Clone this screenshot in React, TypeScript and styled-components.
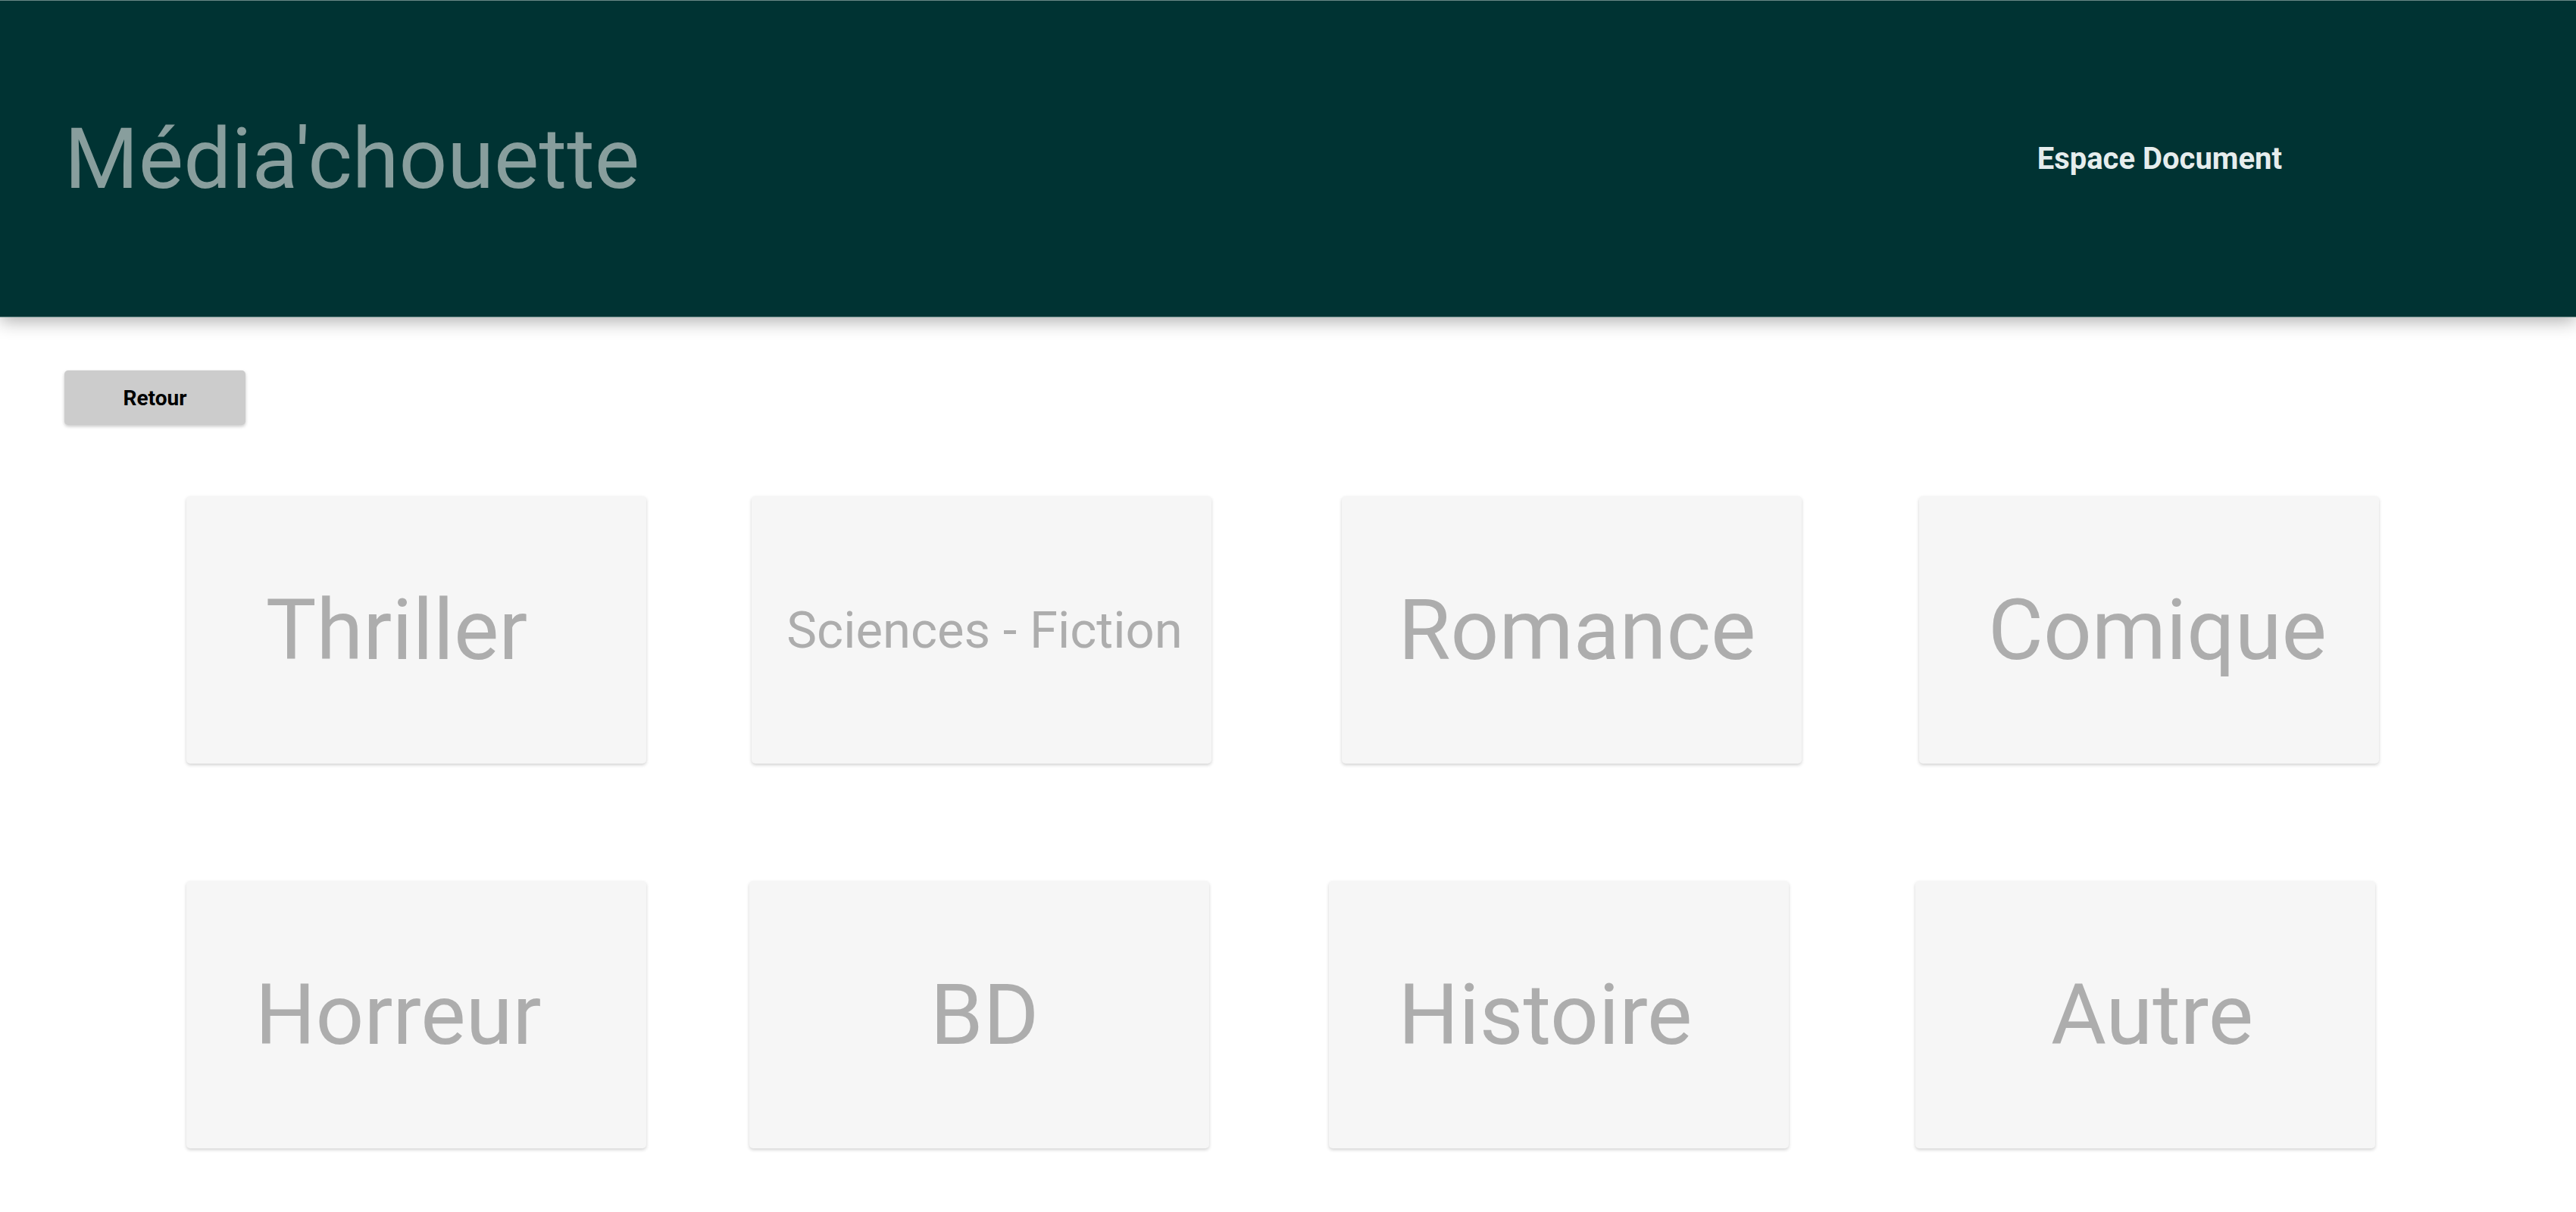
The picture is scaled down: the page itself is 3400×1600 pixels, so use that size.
import React from "react";
import styled, { createGlobalStyle } from "styled-components";

const GlobalStyle = createGlobalStyle`
  html, body {
    margin: 0;
    padding: 0;
    background: #ffffff;
    font-family: Roboto, "Liberation Sans", Arial, sans-serif;
  }
  * { box-sizing: border-box; }
`;

const Header = styled.header`
  height: 419px;
  background: #003333;
  border-top: 1px solid #6a8887;
  border-bottom: 1px solid #7b9796;
  box-shadow: 0 5px 22px rgba(0, 0, 0, 0.32);
  display: flex;
  align-items: center;
  padding-left: 85px;
  padding-right: 388px;
  position: relative;
  z-index: 1;
`;

const Title = styled.h1`
  margin: 0;
  font-family: Roboto, "Liberation Sans", Arial, sans-serif;
  font-weight: 400;
  font-size: 112px;
  line-height: normal;
  color: #889e9d;
`;

const Nav = styled.nav`
  margin-left: auto;
  display: flex;
  align-items: center;
`;

const NavLink = styled.a`
  font-family: Roboto, "Liberation Sans", Arial, sans-serif;
  font-weight: 700;
  font-size: 40px;
  color: #e6eded;
  text-decoration: none;
`;

const Main = styled.main`
  padding: 70px 0 80px 0;
`;

const Toolbar = styled.div`
  padding-left: 85px;
`;

const BackButton = styled.button`
  width: 239px;
  height: 72px;
  background: #cccccc;
  border: none;
  border-radius: 5px;
  box-shadow: 0 2px 4px rgba(0, 0, 0, 0.22);
  font-family: Roboto, "Liberation Sans", Arial, sans-serif;
  font-weight: 700;
  font-size: 28px;
  color: #000000;
  cursor: pointer;
`;

const Grid = styled.section`
  margin-top: 94px;
  display: flex;
  flex-direction: column;
  gap: 155px;
  padding-left: 246px;
`;

const Row = styled.div`
  display: flex;
`;

const Card = styled.div<{ $gap: number }>`
  width: 607px;
  height: 353px;
  margin-left: ${(p) => p.$gap}px;
  background: #f6f6f6;
  border-radius: 5px;
  box-shadow: 0 2px 4px rgba(0, 0, 0, 0.18);
  display: flex;
  align-items: center;
  justify-content: center;
  flex-shrink: 0;
`;

const CardLabel = styled.span<{ $size: number; $shift: number }>`
  font-family: Roboto, "Liberation Sans", Arial, sans-serif;
  font-weight: 400;
  font-size: ${(p) => p.$size}px;
  line-height: normal;
  color: #adadad;
  white-space: nowrap;
  padding-left: ${(p) => (p.$shift > 0 ? p.$shift * 2 : 0)}px;
  padding-right: ${(p) => (p.$shift < 0 ? -p.$shift * 2 : 0)}px;
`;

type Genre = { label: string; gap: number; size: number; shift: number };

const rows: Genre[][] = [
  [
    { label: "Thriller", gap: 0, size: 112, shift: -26 },
    { label: "Sciences - Fiction", gap: 139, size: 67, shift: 4 },
    { label: "Romance", gap: 172, size: 112, shift: 7 },
    { label: "Comique", gap: 155, size: 112, shift: 11 },
  ],
  [
    { label: "Horreur", gap: 0, size: 112, shift: -24 },
    { label: "BD", gap: 136, size: 112, shift: 7 },
    { label: "Histoire", gap: 158, size: 112, shift: -18 },
    { label: "Autre", gap: 167, size: 112, shift: 9 },
  ],
];

export default function App() {
  return (
    <>
      <GlobalStyle />
      <Header>
        <Title>Média'chouette</Title>
        <Nav>
          <NavLink href="#">Espace Document</NavLink>
        </Nav>
      </Header>
      <Main>
        <Toolbar>
          <BackButton>Retour</BackButton>
        </Toolbar>
        <Grid>
          {rows.map((row, i) => (
            <Row key={i}>
              {row.map((g) => (
                <Card key={g.label} $gap={g.gap}>
                  <CardLabel $size={g.size} $shift={g.shift}>
                    {g.label}
                  </CardLabel>
                </Card>
              ))}
            </Row>
          ))}
        </Grid>
      </Main>
    </>
  );
}
